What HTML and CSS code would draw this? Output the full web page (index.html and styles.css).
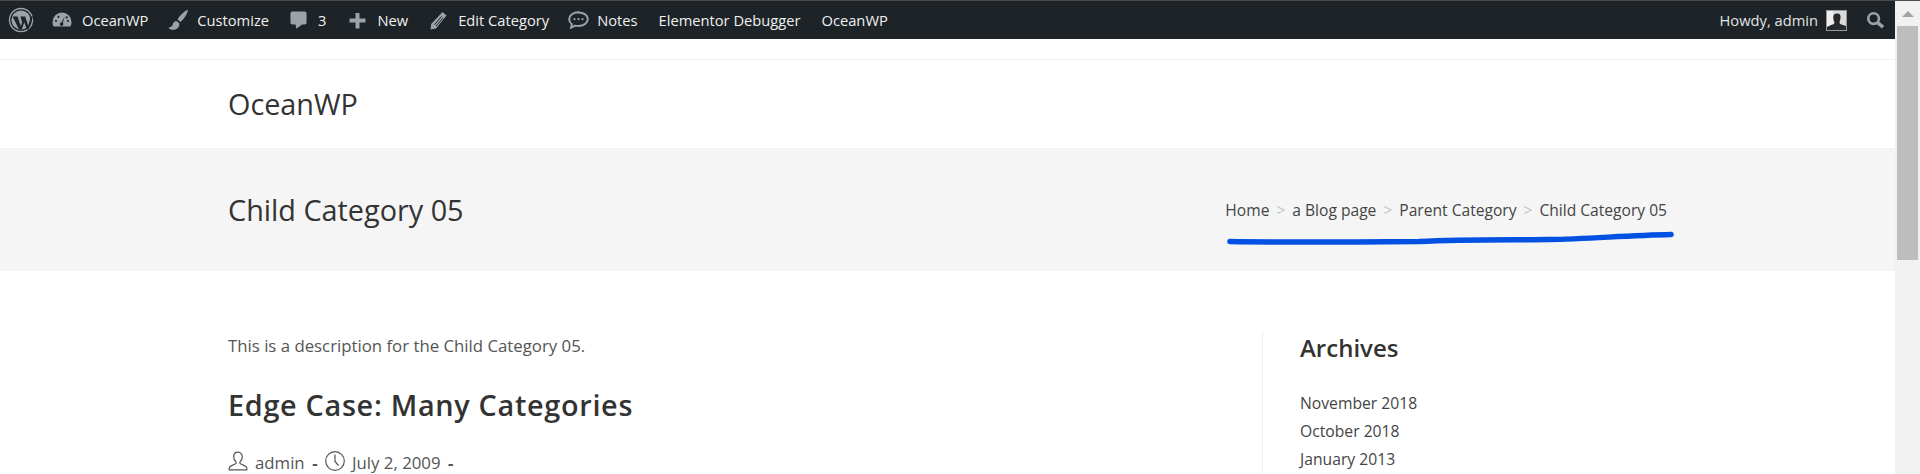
FILE: index.html
```html
<!DOCTYPE html>
<html>
  <head>
    <title>Child Category 05 - OceanWP</title>
    <link rel="stylesheet" href="styles.css">
  </head>
  <body>
    <div class="topline"></div>
    <div class="window">
      <div class="page">
        <div class="adminbar">
          <div class="bar-left">
            <a class="bar-item wp-item">
              <svg class="icon" width="26" height="26" viewBox="0 0 26 26">
                <circle cx="13" cy="13" r="11.5" fill="none" stroke="#9ca2a7" stroke-width="1.4"/>
                <circle cx="13" cy="13" r="9.6" fill="#9ca2a7"/>
                <path d="M4.6 9.6h5l3.2 9.6 1.4-4-1.9-5.6h4.9l3 9.4 2.6-9.4h2.2l-4.4 13h-1.6l-2.7-7.4-2.6 7.4H11z" fill="#1d2327"/>
              </svg>
            </a>
            <a class="bar-item site-item">
              <svg class="icon" width="20" height="20" viewBox="0 0 20 20">
                <path d="M10 2.500a9.500 9.500 0 0 0-9.500 9.500c0 1.700.4 3.300 1.200 4.500h16.600c.8-1.200 1.200-2.800 1.200-4.500A9.500 9.500 0 0 0 10 2.500z" fill="#9ca2a7"/>
                <path d="M12.800 6.500l-2 6.300a1.700 1.700 0 1 1-1.400-.4z" fill="#1d2327"/>
                <circle cx="4" cy="11" r="1.100" fill="#1d2327"/><circle cx="6.500" cy="6.800" r="1.100" fill="#1d2327"/><circle cx="16" cy="11" r="1.100" fill="#1d2327"/><circle cx="14.800" cy="7.400" r="1.100" fill="#1d2327"/>
              </svg>
              OceanWP
            </a>
            <a class="bar-item customize-item">
              <svg class="icon" width="22" height="24" viewBox="0 0 22 24">
                <path d="M21 1.500c-3.500 1.500-8 5.500-10.500 10l3 2.500C17.500 10.500 20.500 5.500 21 1.500z" fill="#9ca2a7"/>
                <path d="M9.500 13c-3 .3-3.200 2.300-4 4.200-.5 1.200-2 1.900-4 2.300C2.500 22 6 22.300 8.800 21.300c2.800-1 4-3.800 3.500-6z" fill="#9ca2a7"/>
              </svg>
              Customize
            </a>
            <a class="bar-item comments-item">
              <svg class="icon" width="17" height="20" viewBox="0 0 19 20">
                <path d="M2.500 0.500h14a2 2 0 0 1 2 2v10.500a2 2 0 0 1-2 2h-3L7 19.800 6.200 15H2.500a2 2 0 0 1-2-2V2.500a2 2 0 0 1 2-2z" fill="#9ca2a7"/>
              </svg>
              3
            </a>
            <a class="bar-item new-item">
              <svg class="icon" width="17" height="17" viewBox="0 0 17 17">
                <path d="M6.500 1h4v5.500H16.500v4H10.500V16.500h-4V10.500H.5v-4h6z" fill="#9ca2a7"/>
              </svg>
              New
            </a>
            <a class="bar-item edit-item">
              <svg class="icon" width="17" height="19" viewBox="0 0 17 19">
                <path d="M12.500 1l4 3.500L6 17.500 .5 18.500 1.200 13z" fill="#9ca2a7"/>
                <path d="M11.500 5.500L4.500 13.700M13 7L6 15" fill="none" stroke="#1d2327" stroke-width="1"/>
              </svg>
              Edit Category
            </a>
            <a class="bar-item notes-item">
              <svg class="icon" width="21" height="18" viewBox="0 0 21 18">
                <path d="M10.500 1.200C5.200 1.200 1.200 4.200 1.200 8.200c0 2 1 3.700 2.700 5l-.9 3.500 4.300-2.100c1 .3 2.100.4 3.200.4 5.300 0 9.300-3 9.300-6.800s-4-6.800-9.300-6.800z" fill="none" stroke="#9ca2a7" stroke-width="2"/>
                <circle cx="6.500" cy="8.200" r="1.100" fill="#9ca2a7"/><circle cx="10.500" cy="8.200" r="1.100" fill="#9ca2a7"/><circle cx="14.500" cy="8.200" r="1.100" fill="#9ca2a7"/>
              </svg>
              Notes
            </a>
            <a class="bar-item debugger-item">Elementor Debugger</a>
            <a class="bar-item theme-item">OceanWP</a>
          </div>
          <div class="bar-right">
            <a class="bar-item howdy">
              Howdy, admin
              <svg class="avatar" width="21" height="21" viewBox="0 0 21 21">
                <rect width="21" height="21" fill="#9a9a9a"/>
                <rect x="1" y="1" width="19" height="19" fill="#d9d9d9"/>
                <rect x="1" y="1" width="6" height="19" fill="#efefef"/>
                <path d="M1 20v-3l4-2 3-1 .5-2C7 10 7 6 8 4.500c1.500-1.500 5-1.500 6 0 1 2 .5 5-.5 7.500l.5 2 6 2v4z" fill="#26282a"/>
              </svg>
            </a>
            <a class="bar-item search-item">
              <svg class="icon" width="19" height="19" viewBox="0 0 20 20">
                <circle cx="8" cy="8" r="5.600" fill="none" stroke="#9ca2a7" stroke-width="2.800"/>
                <path d="M12.500 12.500l5.500 4.500" fill="none" stroke="#9ca2a7" stroke-width="3.600"/>
              </svg>
            </a>
          </div>
        </div>

        <div class="top-space"></div>

        <header class="site-header">
          <div class="container">
            <a class="site-title">OceanWP</a>
          </div>
        </header>

        <section class="page-header">
          <div class="container page-header-inner">
            <h1 class="page-title">Child Category 05</h1>
            <nav class="breadcrumbs">
              <a>Home</a><span class="sep">&gt;</span><a>a Blog page</a><span class="sep">&gt;</span><a>Parent Category</a><span class="sep">&gt;</span><a>Child Category 05</a>
            </nav>
          </div>
        </section>

        <div class="container content-wrap">
          <main class="content">
            <p class="description">This is a description for the Child Category 05.</p>
            <h2 class="post-title">Edge Case: Many Categories</h2>
            <ul class="post-meta">
              <li>
                <svg class="meta-icon" width="20" height="20" viewBox="0 0 20 20">
                  <path d="M10 1.200c-2.700 0-4.300 2-4.300 4.600 0 2 .9 3.900 2.200 5 .5.500.3 1.500-.4 1.900l-4.800 2.400c-1 .5-1.500 1.200-1.500 2.200v1.500h17.600v-1.500c0-1-.5-1.700-1.500-2.200l-4.800-2.400c-.7-.4-.9-1.400-.4-1.900 1.300-1.100 2.200-3 2.200-5 0-2.600-1.600-4.600-4.300-4.600z" fill="none" stroke="#555" stroke-width="1.200"/>
                </svg>
                admin
              </li>
              <li class="dash">-</li>
              <li>
                <svg class="meta-icon" width="20" height="20" viewBox="0 0 20 20">
                  <circle cx="10" cy="10" r="9.300" fill="none" stroke="#555" stroke-width="1.200"/>
                  <path d="M10 3.500V10.500l3.500 4" fill="none" stroke="#555" stroke-width="1.200"/>
                </svg>
                July 2, 2009
              </li>
              <li class="dash">-</li>
            </ul>
          </main>
          <aside class="sidebar">
            <h4 class="widget-title">Archives</h4>
            <ul class="archive-list">
              <li>November 2018</li>
              <li>October 2018</li>
              <li>January 2013</li>
            </ul>
          </aside>
        </div>

        <svg class="marker" width="460" height="20" viewBox="0 0 460 20">
          <path d="M6 14.500C60 15.500 130 15 195 14.500 240 12 290 13 325 12.500 365 12 400 8.500 447 7.500" fill="none" stroke="#0351e3" stroke-width="5.500" stroke-linecap="round"/>
        </svg>
      </div>

      <div class="scrollbar">
        <div class="scroll-arrow"></div>
        <div class="scroll-thumb"></div>
      </div>
    </div>
  </body>
</html>
```

FILE: styles.css
```css
* {box-sizing: border-box;}

html, body {
  height: 100%;
}

body {
  margin: 0;
  overflow: hidden;
  font-family: "Open Sans", Arial, sans-serif;
  font-size: 14px;
  color: #555;
  background-color: #fff;
}

a {
  color: inherit;
  text-decoration: none;
}

ul {
  list-style: none;
  margin: 0;
  padding: 0;
}

.topline {
  height: 1px;
  background-color: #4a4a4a;
}

.window {
  display: flex;
  height: 473px;
}

.page {
  position: relative;
  width: 1895px;
  overflow: hidden;
}

/* admin bar */

.adminbar {
  display: flex;
  justify-content: space-between;
  height: 38px;
  background-color: #1d2327;
  color: #f0f0f1;
  font-size: 14.7px;
}

.bar-left, .bar-right {
  display: flex;
  align-items: center;
}

.bar-item {
  display: flex;
  align-items: center;
  white-space: nowrap;
}

.icon {
  flex: none;
}

.wp-item {margin-left: 8px;}
.site-item {margin-left: 18px;}
.site-item .icon {margin-right: 10px;}
.customize-item {margin-left: 19px;}
.customize-item .icon {margin-right: 8px;}
.comments-item {margin-left: 21px;}
.comments-item .icon {margin-right: 11px;}
.new-item {margin-left: 23px;}
.new-item .icon {margin-right: 11px;}
.edit-item {margin-left: 22px;}
.edit-item .icon {margin-right: 11px;}
.notes-item {margin-left: 19px;}
.notes-item .icon {margin-right: 8px;}
.debugger-item {margin-left: 21px;}
.theme-item {margin-left: 21px;}

.howdy {
  color: #e0e2e3;
}

.avatar {
  margin-left: 8px;
}

.search-item {
  margin-left: 19px;
  margin-right: 10px;
}

/* header */

.top-space {
  height: 21px;
  border-bottom: 1px solid #f1f1f1;
}

.container {
  width: 1439px;
  margin-left: 228px;
}

.site-header {
  height: 89px;
  display: flex;
  align-items: center;
  border-bottom: 1px solid #f1f1f1;
}

.site-title {
  font-size: 28.8px;
  color: #333;
  line-height: 1;
}

.page-header {
  height: 122px;
  background-color: #f5f5f5;
  display: flex;
  align-items: center;
}

.page-header-inner {
  display: flex;
  align-items: center;
  justify-content: space-between;
}

.page-title {
  margin: 0;
  font-size: 28.8px;
  font-weight: 400;
  color: #333;
  line-height: 1.4;
}

.breadcrumbs {
  font-size: 15.6px;
  color: #444;
}

.sep {
  color: #c4c4c4;
  margin: 0 7px;
}

/* content */

.content-wrap {
  display: flex;
  margin-top: 60px;
}

.content {
  width: 1035px;
  min-height: 150px;
  border-right: 1px solid #f1f1f1;
}

.description {
  margin: 2px 0 0;
  font-size: 16.8px;
  line-height: 1.6;
  color: #555;
}

.post-title {
  margin: 25px 0 0;
  font-size: 28.8px;
  font-weight: 600;
  letter-spacing: .7px;
  color: #333;
  line-height: 1.4;
}

.post-meta {
  display: flex;
  align-items: center;
  gap: 7.5px;
  margin-top: 26px;
  font-size: 16.8px;
  color: #555;
}

.post-meta li {
  display: flex;
  align-items: center;
}

.meta-icon {
  margin-right: 7px;
  margin-top: -4px;
}

.dash {
  font-weight: 700;
}

.sidebar {
  padding-left: 37px;
}

.widget-title {
  margin: 0;
  font-size: 24px;
  font-weight: 600;
  color: #333;
  line-height: 1.4;
}

.archive-list {
  margin-top: 24px;
  font-size: 15.7px;
  color: #444;
}

.archive-list li {
  line-height: 28px;
}

/* hand drawn underline over the breadcrumbs */

.marker {
  position: absolute;
  left: 1224px;
  top: 226px;
}

/* scrollbar */

.scrollbar {
  width: 25px;
  background-color: #f1f1f1;
  padding: 0 2px;
}

.scroll-arrow {
  width: 0;
  height: 0;
  margin: 10px auto 9px;
  border-left: 6px solid transparent;
  border-right: 6px solid transparent;
  border-bottom: 6px solid #a3a3a3;
}

.scroll-thumb {
  height: 234px;
  background-color: #bdbdbd;
}
```
